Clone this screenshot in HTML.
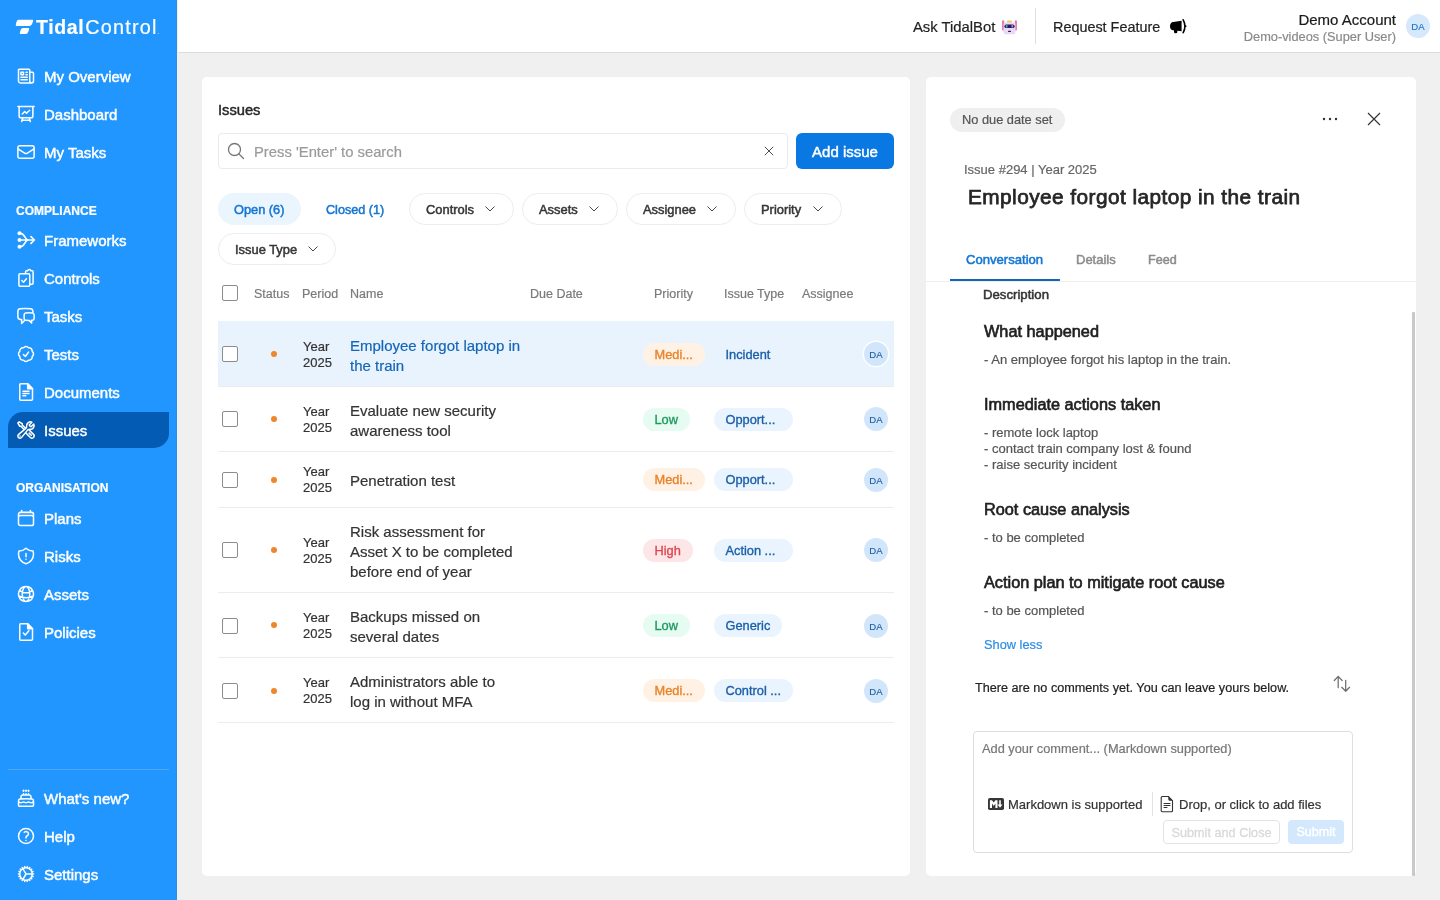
<!DOCTYPE html>
<html><head><meta charset="utf-8">
<style>
*{box-sizing:border-box;margin:0;padding:0}
html,body{width:1440px;height:900px;overflow:hidden;background:#f0f0f0;font-family:"Liberation Sans",sans-serif;color:#222;-webkit-text-stroke:0.2px currentColor}
.a{position:absolute}
.t{position:absolute;white-space:nowrap;line-height:20px;height:20px}
#side{position:absolute;left:0;top:0;width:177px;height:900px;background:#2196ff}
#sideline{position:absolute;left:176px;top:0;width:2px;height:900px;background:linear-gradient(90deg,#3b8ad6 50%,#e2f5ff 50%)}
.nav{position:absolute;left:44px;color:#fff;font-size:15px;-webkit-text-stroke:0.45px #fff;line-height:20px;white-space:nowrap}
.ni{position:absolute;left:16px;width:20px;height:20px}
.ni svg{width:20px;height:20px;display:block;overflow:visible}
.sec{position:absolute;left:16px;color:#fff;font-weight:bold;font-size:12px;line-height:20px}
#hdr{position:absolute;left:178px;top:0;width:1262px;height:53px;background:#fff;border-bottom:1px solid #dcdcdc}
.card{position:absolute;background:#fff;border-radius:5px}
.pill{position:absolute;height:32px;border:1px solid #ededed;border-radius:16px;background:#fff}
.ft{position:absolute;font-size:12.9px;-webkit-text-stroke:0.5px currentColor;color:#363636;line-height:20px;white-space:nowrap}
.chev{position:absolute;width:10px;height:6px}
.th{position:absolute;top:284px;font-size:12.5px;color:#7a7a7a;line-height:20px;white-space:nowrap}
.cb{position:absolute;left:222px;width:16px;height:16px;border:1px solid #8c8c8c;border-radius:2px;background:#fff}
.row{position:absolute;left:218px;width:676px}
.bd{position:absolute;left:218px;width:676px;height:1px;background:#ececec}
.dot{position:absolute;left:271px;width:6px;height:6px;border-radius:3px;background:#f0862b}
.per{position:absolute;left:303px;font-size:13px;line-height:16px;color:#333;white-space:nowrap}
.nm{position:absolute;left:350px;font-size:15px;line-height:20px;color:#333;white-space:nowrap}
.tag{position:absolute;height:23px;border-radius:12px;font-size:12.8px;-webkit-text-stroke:0.35px currentColor;line-height:23px;padding-left:11.5px;white-space:nowrap}
.med{background:#fff2e5;color:#e8832a}
.low{background:#e6fbf1;color:#1e9a5e}
.high{background:#fde6e8;color:#e0474f}
.typ{background:#eaf4fe;color:#1a5fa8}
.av{position:absolute;left:864px;width:24px;height:24px;border-radius:12px;background:#d2e6fb;color:#1b5aa0;font-size:9.6px;-webkit-text-stroke:0.1px currentColor;text-align:center;line-height:25px}
.h3{position:absolute;left:984px;font-size:16.3px;-webkit-text-stroke:0.65px currentColor;color:#1f1f1f;line-height:20px;white-space:nowrap}
.p{position:absolute;left:984px;font-size:13px;color:#555;line-height:16px;white-space:nowrap}
</style></head>
<body>
<div id="root" style="position:absolute;left:0;top:0;width:1440px;height:900px;will-change:transform">
<div id="side"></div><div id="sideline"></div>
<div class="a" style="left:8px;top:412px;width:161px;height:36px;background:#035bb3;border-radius:15px 0 15px 0"></div>
<svg class="a" style="left:0;top:0" width="40" height="40" viewBox="0 0 40 40"><path d="M18.3 19.85H32.7C33.1 19.85 33.3 20.2 33.1 20.7 32.5 23.5 31.5 26 29.5 26H16.2C15.8 26 15.7 25.7 15.8 25.3 16.2 22.5 16.8 19.85 18.3 19.85Z" fill="#fff"/><path d="M22.6 27.9H28.8C29.2 27.9 29.3 28.2 29.2 28.6 28.7 31.5 27.8 33.95 26 33.95H20.2C19.8 33.95 19.7 33.6 19.8 33.2 20.3 30.3 21.2 27.9 22.6 27.9Z" fill="#fff"/></svg>
<div class="a" style="left:36px;top:15px;font-size:19.5px;line-height:24px;color:#fff;white-space:nowrap"><span style="font-weight:bold;letter-spacing:0.6px">Tidal</span><span style="font-size:19.8px;letter-spacing:1.25px;margin-left:1px">Control</span><span style="font-size:5px;opacity:.8">.</span></div>
<div class="ni" style="top:66px"><svg viewBox="0 0 24 24" fill="none" stroke="#fff" stroke-width="1.8" stroke-linecap="round" stroke-linejoin="round"><path d="M12 7.5h1.5m-1.5 3h1.5m-7.5 3h7.5m-7.5 3h7.5m3-9h3.375c.621 0 1.125.504 1.125 1.125V18a2.250 2.250 0 0 1-2.25 2.25M16.5 7.5V18a2.25 2.25 0 0 0 2.25 2.25M16.5 7.5V4.875c0-.621-.504-1.125-1.125-1.125H4.125C3.504 3.75 3 4.254 3 4.875V18a2.25 2.25 0 0 0 2.25 2.25h13.5M6 7.5h3v3H6v-3Z"/></svg></div>
<div class="nav" style="top:67px">My Overview</div>
<div class="ni" style="top:104px"><svg viewBox="0 0 24 24" fill="none" stroke="#fff" stroke-width="1.8" stroke-linecap="round" stroke-linejoin="round"><path d="M3.75 3v11.25A2.25 2.25 0 0 0 6 16.5h2.25M3.75 3h-1.5m1.5 0h16.5m0 0h1.5m-1.5 0v11.25A2.25 2.25 0 0 1 18 16.5h-2.25m-7.5 0h7.5m-7.5 0-1 3m8.5-3 1 3m0 0 .5 1.5m-.5-1.5h-9.5m0 0-.5 1.5m.75-9 3-3 2.148 2.148A12.061 12.061 0 0 1 16.5 7.605"/></svg></div>
<div class="nav" style="top:105px">Dashboard</div>
<div class="ni" style="top:142px"><svg viewBox="0 0 24 24" fill="none" stroke="#fff" stroke-width="1.8" stroke-linecap="round" stroke-linejoin="round"><path d="M21.75 6.75v10.5a2.25 2.25 0 0 1-2.25 2.25h-15a2.25 2.25 0 0 1-2.25-2.25V6.75m19.5 0A2.25 2.25 0 0 0 19.5 4.5h-15a2.25 2.25 0 0 0-2.250 2.25m19.5 0v.243a2.25 2.25 0 0 1-1.07 1.916l-7.5 4.615a2.25 2.25 0 0 1-2.36 0L3.32 8.91a2.25 2.25 0 0 1-1.07-1.916V6.75"/></svg></div>
<div class="nav" style="top:143px">My Tasks</div>
<div class="ni" style="top:230px"><svg viewBox="0 0 24 24" fill="none" stroke="#fff" stroke-width="1.8" stroke-linecap="round" stroke-linejoin="round"><circle cx='4.2' cy='4' r='2.4' fill='#fff' stroke='none'/><circle cx='4.2' cy='12' r='2.4' fill='#fff' stroke='none'/><circle cx='4.2' cy='20' r='2.4' fill='#fff' stroke='none'/><path d='M5.5 4c5 0 5 8 9 8M5.5 20c5 0 5-8 9-8M5.5 12h16.5M18 8l4 4-4 4' stroke-width='2'/></svg></div>
<div class="nav" style="top:231px">Frameworks</div>
<div class="ni" style="top:268px"><svg viewBox="0 0 24 24" fill="none" stroke="#fff" stroke-width="1.8" stroke-linecap="round" stroke-linejoin="round"><path d='M11.5 6.5V4.5c0-.7.5-1.2 1.2-1.2h1.3c.3-.9 1-1.5 2-1.5s1.7.6 2 1.5h1.3c.7 0 1.2.5 1.2 1.2v13.8c0 .7-.5 1.2-1.2 1.2H17'/><rect x='3.5' y='7' width='13' height='15' rx='1.3'/><path d='M7 15l2 2 3.5-4'/></svg></div>
<div class="nav" style="top:269px">Controls</div>
<div class="ni" style="top:306px"><svg viewBox="0 0 24 24" fill="none" stroke="#fff" stroke-width="1.8" stroke-linecap="round" stroke-linejoin="round"><path d="M20.25 8.511c.884.284 1.5 1.128 1.5 2.097v4.286c0 1.136-.847 2.1-1.98 2.193-.34.027-.68.052-1.020.072v3.091l-3-3c-1.354 0-2.694-.055-4.020-.163a2.115 2.115 0 0 1-.825-.242m9.345-8.334a2.126 2.126 0 0 0-.476-.095 48.64 48.64 0 0 0-8.048 0c-1.131.094-1.976 1.057-1.976 2.192v4.286c0 .837.46 1.58 1.155 1.951m9.345-8.334V6.637c0-1.621-1.152-3.026-2.76-3.235A48.455 48.455 0 0 0 11.25 3c-2.115 0-4.198.137-6.24.402-1.608.209-2.76 1.614-2.76 3.235v6.226c0 1.621 1.152 3.026 2.76 3.235.577.075 1.157.14 1.74.194V21l4.155-4.155"/></svg></div>
<div class="nav" style="top:307px">Tasks</div>
<div class="ni" style="top:344px"><svg viewBox="0 0 24 24" fill="none" stroke="#fff" stroke-width="1.8" stroke-linecap="round" stroke-linejoin="round"><path d="M9 12.75 11.25 15 15 9.75M21 12c0 1.268-.63 2.39-1.593 3.068a3.745 3.745 0 0 1-1.043 3.296 3.745 3.745 0 0 1-3.296 1.043A3.745 3.745 0 0 1 12 21c-1.268 0-2.39-.63-3.068-1.593a3.746 3.746 0 0 1-3.296-1.043 3.745 3.745 0 0 1-1.043-3.296A3.745 3.745 0 0 1 3 12c0-1.268.63-2.39 1.593-3.068a3.745 3.745 0 0 1 1.043-3.296 3.746 3.746 0 0 1 3.296-1.043A3.746 3.746 0 0 1 12 3c1.268 0 2.39.63 3.068 1.593a3.746 3.746 0 0 1 3.296 1.043 3.746 3.746 0 0 1 1.043 3.296A3.745 3.745 0 0 1 21 12Z"/></svg></div>
<div class="nav" style="top:345px">Tests</div>
<div class="ni" style="top:382px"><svg viewBox="0 0 24 24" fill="none" stroke="#fff" stroke-width="1.8" stroke-linecap="round" stroke-linejoin="round"><path d='M5.7 2.2h8.3l5.8 5.8v12.6c0 .7-.5 1.2-1.2 1.2H5.7c-.7 0-1.2-.5-1.2-1.2V3.4c0-.7.5-1.2 1.2-1.2Z'/><path d='M14 2.2v5.8h5.8Z' fill='#fff'/><path d='M8.3 11h7.3M8.3 13.8h7.3M8.3 16.6h3.4'/></svg></div>
<div class="nav" style="top:383px">Documents</div>
<div class="ni" style="top:420px"><svg viewBox="0 0 24 24" fill="none" stroke="#fff" stroke-width="1.8" stroke-linecap="round" stroke-linejoin="round"><path d="M11.42 15.17 17.25 21A2.652 2.652 0 0 0 21 17.25l-5.877-5.877M11.42 15.17l2.496-3.03c.317-.384.74-.626 1.208-.766M11.42 15.17l-4.655 5.653a2.548 2.548 0 1 1-3.586-3.586l6.837-5.63m5.108-.233c.55-.164 1.163-.188 1.743-.14a4.5 4.5 0 0 0 4.486-6.336l-3.276 3.277a3.004 3.004 0 0 1-2.25-2.25l3.276-3.276a4.5 4.5 0 0 0-6.336 4.486c.091 1.076-.071 2.264-.904 2.95l-.102.085m-1.745 1.437L5.909 7.5H4.5L2.25 3.75l1.5-1.5L7.5 4.5v1.409l4.26 4.26m-1.745 1.437 1.745-1.437m6.615 8.206L15.75 15.75M4.867 19.125h.008v.008h-.008v-.008Z"/></svg></div>
<div class="nav" style="top:421px">Issues</div>
<div class="ni" style="top:508px"><svg viewBox="0 0 24 24" fill="none" stroke="#fff" stroke-width="1.8" stroke-linecap="round" stroke-linejoin="round"><path d="M6.75 3v2.25M17.25 3v2.25M3 18.75V7.5a2.25 2.25 0 0 1 2.25-2.25h13.5A2.25 2.25 0 0 1 21 7.5v11.25m-18 0A2.25 2.25 0 0 0 5.25 21h13.5A2.25 2.25 0 0 0 21 18.75m-18 0v-7.5A2.25 2.25 0 0 1 5.25 9h13.5A2.25 2.25 0 0 1 21 11.25v7.5"/></svg></div>
<div class="nav" style="top:509px">Plans</div>
<div class="ni" style="top:546px"><svg viewBox="0 0 24 24" fill="none" stroke="#fff" stroke-width="1.8" stroke-linecap="round" stroke-linejoin="round"><path d="M12 9v3.75m0-10.036A11.959 11.959 0 0 1 3.598 6 11.99 11.99 0 0 0 3 9.75c0 5.592 3.824 10.29 9 11.622 5.176-1.332 9-6.03 9-11.622 0-1.31-.21-2.57-.598-3.75h-.152c-3.196 0-6.1-1.25-8.25-3.286Zm0 13.036h.008v.008H12v-.008Z"/></svg></div>
<div class="nav" style="top:547px">Risks</div>
<div class="ni" style="top:584px"><svg viewBox="0 0 24 24" fill="none" stroke="#fff" stroke-width="1.8" stroke-linecap="round" stroke-linejoin="round"><path d="M12 21a9.004 9.004 0 0 0 8.716-6.747M12 21a9.004 9.004 0 0 1-8.716-6.747M12 21c2.485 0 4.5-4.03 4.5-9S14.485 3 12 3m0 18c-2.485 0-4.5-4.03-4.5-9S9.515 3 12 3m0 0a8.997 8.997 0 0 1 7.843 4.582M12 3a8.997 8.997 0 0 0-7.843 4.582m15.686 0A11.953 11.953 0 0 1 12 10.5c-2.998 0-5.74-1.1-7.843-2.918m15.686 0A8.959 8.959 0 0 1 21 12c0 .778-.099 1.533-.284 2.253m0 0A17.919 17.919 0 0 1 12 16.5c-3.162 0-6.133-.815-8.716-2.247m0 0A9.015 9.015 0 0 1 3 12c0-1.605.42-3.113 1.157-4.418"/></svg></div>
<div class="nav" style="top:585px">Assets</div>
<div class="ni" style="top:622px"><svg viewBox="0 0 24 24" fill="none" stroke="#fff" stroke-width="1.8" stroke-linecap="round" stroke-linejoin="round"><path d='M5.7 2.2h8.3l5.8 5.8v12.6c0 .7-.5 1.2-1.2 1.2H5.7c-.7 0-1.2-.5-1.2-1.2V3.4c0-.7.5-1.2 1.2-1.2Z'/><path d='M14 2.2v5.8h5.8Z' fill='#fff'/><path d='M8.8 13.2l2.3 2.4 4.4-5'/></svg></div>
<div class="nav" style="top:623px">Policies</div>
<div class="ni" style="top:788px"><svg viewBox="0 0 24 24" fill="none" stroke="#fff" stroke-width="1.8" stroke-linecap="round" stroke-linejoin="round"><path d="M12 8.25v-1.5m0 1.5c-1.355 0-2.697.056-4.024.166C6.845 8.51 6 9.473 6 10.608v2.513m6-4.871c1.355 0 2.697.056 4.024.166C17.155 8.51 18 9.473 18 10.608v2.513M15 8.25v-1.5m-6 1.5v-1.5m12 9.75-1.5.75a3.354 3.354 0 0 1-3 0 3.354 3.354 0 0 0-3 0 3.354 3.354 0 0 1-3 0 3.354 3.354 0 0 0-3 0 3.354 3.354 0 0 1-3 0L3 16.5m15-3.379a48.474 48.474 0 0 0-6-.371c-2.032 0-4.034.126-6 .371m12 0c.39.049.777.102 1.163.16 1.07.16 1.837 1.094 1.837 2.175v5.169c0 .621-.504 1.125-1.125 1.125H4.125A1.125 1.125 0 0 1 3 20.625v-5.17c0-1.08.768-2.014 1.837-2.174A47.78 47.78 0 0 1 6 13.12M12.265 3.11a.375.375 0 1 1-.53 0L12 2.845l.265.265Zm-3 0a.375.375 0 1 1-.53 0L9 2.845l.265.265Zm6 0a.375.375 0 1 1-.53 0L15 2.845l.265.265Z"/></svg></div>
<div class="nav" style="top:789px">What&#39;s new?</div>
<div class="ni" style="top:826px"><svg viewBox="0 0 24 24" fill="none" stroke="#fff" stroke-width="1.8" stroke-linecap="round" stroke-linejoin="round"><path d="M9.879 7.519c1.171-1.025 3.071-1.025 4.242 0 1.172 1.025 1.172 2.687 0 3.712-.203.179-.43.326-.67.442-.745.361-1.45.999-1.45 1.827v.75M21 12a9 9 0 1 1-18 0 9 9 0 0 1 18 0Zm-9 5.25h.008v.008H12v-.008Z"/></svg></div>
<div class="nav" style="top:827px">Help</div>
<div class="ni" style="top:864px"><svg viewBox="0 0 24 24" fill="none" stroke="#fff" stroke-width="1.8" stroke-linecap="round" stroke-linejoin="round"><path d="M4.5 12a7.5 7.5 0 0 0 15 0m-15 0a7.5 7.5 0 1 1 15 0m-15 0H3m16.5 0H21m-1.5 0H12m-8.457 3.077 1.41-.513m14.095-5.13 1.41-.513M5.106 17.785l1.15-.964m11.49-9.642 1.149-.964M7.501 19.795l.75-1.3m7.5-12.99.75-1.3m-6.063 16.658.26-1.477m2.605-14.772.26-1.477m0 17.726-.26-1.477M10.698 4.614l-.26-1.477M16.5 19.794l-.75-1.299M7.5 4.205 12 12m6.894 5.785-1.149-.964M6.256 7.178l-1.15-.964m15.352 8.864-1.41-.513M4.954 9.435l-1.41-.514M12.002 12l-3.75 6.495"/></svg></div>
<div class="nav" style="top:865px">Settings</div>
<div class="sec" style="top:201px">COMPLIANCE</div>
<div class="sec" style="top:478px">ORGANISATION</div>
<div class="a" style="left:8px;top:769px;width:161px;height:1px;background:#4aa6f7"></div>
<div id="hdr"></div>
<div class="t" style="left:913px;top:17px;font-size:14.8px;color:#222">Ask TidalBot</div>
<svg class="a" style="left:1002px;top:19.5px" width="15" height="15" viewBox="0 0 15 15">
 <rect x="0" y="0.2" width="2.2" height="10.5" rx="1.1" fill="#e27fae"/><rect x="12.8" y="0.2" width="2.2" height="10.5" rx="1.1" fill="#e27fae"/>
 <rect x="5" y="0.4" width="5" height="2.4" rx="1.1" fill="#f2c94c"/>
 <rect x="1.6" y="2.3" width="11.8" height="12" rx="2.6" fill="#e9d8f6"/>
 <rect x="2.4" y="4.4" width="10.2" height="3.7" rx="1.85" fill="#2d1b5e"/>
 <rect x="3.9" y="5.1" width="1.6" height="2.3" rx=".5" fill="#3db5a9"/><rect x="9.5" y="5.1" width="1.6" height="2.3" rx=".5" fill="#a08fe0"/>
 <rect x="6" y="10.8" width="3" height="1.3" rx=".65" fill="#2d1b5e"/>
</svg>
<div class="a" style="left:1035px;top:8px;width:1px;height:36px;background:#dedede"></div>
<div class="t" style="left:1053px;top:17px;font-size:14.4px;color:#222">Request Feature</div>
<svg class="a" style="left:1170px;top:18.5px" width="17" height="15" viewBox="0 0 17 15">
 <path d="M3.2 3.1 11.6 1.7v10.6L3.2 11.3C1.4 11.2 0 9.7 0 7.2 0 4.7 1.4 3.2 3.2 3.1Z" fill="#000"/>
 <rect x="4" y="8.5" width="3.3" height="5.8" rx="1.4" fill="#000"/>
 <path d="M13.2.8c1.1 2 1.7 4.2 1.7 6.4s-.6 4.5-1.7 6.5" fill="none" stroke="#000" stroke-width="1.6" stroke-linecap="round"/>
 <circle cx="15.6" cy="7.2" r=".9" fill="#000"/>
</svg>
<div class="t" style="left:1296px;top:10px;font-size:15px;color:#1a1a1a;width:100px;text-align:right">Demo Account</div>
<div class="t" style="left:1196px;top:27px;font-size:12.8px;color:#8a8a8a;width:200px;text-align:right">Demo-videos (Super User)</div>
<div class="a" style="left:1406px;top:14px;width:24px;height:24px;border-radius:12px;background:#d6e8fb;color:#1d6fc2;font-size:9.6px;line-height:25px;text-align:center;-webkit-text-stroke:0.1px currentColor">DA</div>
<div class="card" style="left:202px;top:77px;width:708px;height:799px"></div>
<div class="t" style="left:218px;top:100px;font-size:14.7px;-webkit-text-stroke:0.45px currentColor;color:#262626">Issues</div>
<div class="a" style="left:218px;top:133px;width:570px;height:36px;border:1px solid #ebebeb;border-radius:4px;background:#fff"></div>
<svg class="a" style="left:227px;top:142px" width="18" height="18" viewBox="0 0 18 18"><circle cx="7.5" cy="7.5" r="6" fill="none" stroke="#777" stroke-width="1.3"/><path d="M12 12l4.5 4.5" stroke="#777" stroke-width="1.3" stroke-linecap="round"/></svg>
<div class="t" style="left:254px;top:142px;font-size:14.8px;color:#9a9a9a">Press &#39;Enter&#39; to search</div>
<svg class="a" style="left:764px;top:146px" width="10" height="10" viewBox="0 0 10 10"><path d="M.8.8l8.4 8.4M9.2.8 .8 9.2" stroke="#3a3a3a" stroke-width="0.9"/></svg>
<div class="a" style="left:796px;top:133px;width:98px;height:36px;border-radius:6px;background:#0a78e3;color:#fff;font-size:15px;-webkit-text-stroke:0.45px #fff;line-height:37px;text-align:center">Add issue</div>
<div class="a" style="left:218px;top:193px;width:83px;height:32px;border-radius:16px;background:#ebf5fe"></div>
<div class="ft" style="left:234px;top:200px;color:#1677d2;font-size:12.8px">Open (6)</div>
<div class="ft" style="left:326px;top:200px;color:#1677d2;font-size:12.6px">Closed (1)</div>
<div class="pill" style="left:409px;top:193px;width:105px"></div>
<div class="ft" style="left:426px;top:200px">Controls</div>
<svg class="chev" style="left:485px;top:206px" width="10" height="6" viewBox="0 0 10 6"><path d="M.5.5 5 5 9.5.5" fill="none" stroke="#484848" stroke-width="1"/></svg>
<div class="pill" style="left:522px;top:193px;width:96px"></div>
<div class="ft" style="left:539px;top:200px">Assets</div>
<svg class="chev" style="left:589px;top:206px" width="10" height="6" viewBox="0 0 10 6"><path d="M.5.5 5 5 9.5.5" fill="none" stroke="#484848" stroke-width="1"/></svg>
<div class="pill" style="left:626px;top:193px;width:110px"></div>
<div class="ft" style="left:643px;top:200px">Assignee</div>
<svg class="chev" style="left:707px;top:206px" width="10" height="6" viewBox="0 0 10 6"><path d="M.5.5 5 5 9.5.5" fill="none" stroke="#484848" stroke-width="1"/></svg>
<div class="pill" style="left:744px;top:193px;width:98px"></div>
<div class="ft" style="left:761px;top:200px">Priority</div>
<svg class="chev" style="left:813px;top:206px" width="10" height="6" viewBox="0 0 10 6"><path d="M.5.5 5 5 9.5.5" fill="none" stroke="#484848" stroke-width="1"/></svg>
<div class="pill" style="left:218px;top:233px;width:118px"></div>
<div class="ft" style="left:235px;top:240px">Issue Type</div>
<svg class="chev" style="left:308px;top:246px" width="10" height="6" viewBox="0 0 10 6"><path d="M.5.5 5 5 9.5.5" fill="none" stroke="#484848" stroke-width="1"/></svg>
<div class="cb" style="top:285px"></div>
<div class="th" style="left:254px">Status</div>
<div class="th" style="left:302px">Period</div>
<div class="th" style="left:350px">Name</div>
<div class="th" style="left:530px">Due Date</div>
<div class="th" style="left:654px">Priority</div>
<div class="th" style="left:724px">Issue Type</div>
<div class="th" style="left:802px">Assignee</div>
<div class="row" style="top:321px;height:65px;background:#e9f3fe"></div>
<div class="bd" style="top:386px"></div>
<div class="cb" style="top:346px"></div>
<div class="dot" style="top:351px"></div>
<div class="per" style="top:338.55px">Year<br>2025</div>
<div class="nm" style="top:335.80px;color:#1466b8;">Employee forgot laptop in<br>the train</div>
<div class="tag med" style="left:643px;top:343px;width:62px">Medi...</div>
<div class="tag" style="left:714px;top:343px;color:#1a5fa8">Incident</div>
<div class="av" style="top:342px;box-shadow:0 0 0 1.5px #fbfdff;">DA</div>
<div class="bd" style="top:451px"></div>
<div class="cb" style="top:411px"></div>
<div class="dot" style="top:416px"></div>
<div class="per" style="top:403.55px">Year<br>2025</div>
<div class="nm" style="top:400.80px;">Evaluate new security<br>awareness tool</div>
<div class="tag low" style="left:643px;top:408px;width:47px">Low</div>
<div class="tag typ" style="left:714px;top:408px;width:79px">Opport...</div>
<div class="av" style="top:407px;">DA</div>
<div class="bd" style="top:507px"></div>
<div class="cb" style="top:472px"></div>
<div class="dot" style="top:477px"></div>
<div class="per" style="top:464.05px">Year<br>2025</div>
<div class="nm" style="top:471.30px;">Penetration test</div>
<div class="tag med" style="left:643px;top:468px;width:62px">Medi...</div>
<div class="tag typ" style="left:714px;top:468px;width:79px">Opport...</div>
<div class="av" style="top:468px;">DA</div>
<div class="bd" style="top:592px"></div>
<div class="cb" style="top:542px"></div>
<div class="dot" style="top:547px"></div>
<div class="per" style="top:534.65px">Year<br>2025</div>
<div class="nm" style="top:521.90px;">Risk assessment for<br>Asset X to be completed<br>before end of year</div>
<div class="tag high" style="left:643px;top:539px;width:50px">High</div>
<div class="tag typ" style="left:714px;top:539px;width:79px">Action ...</div>
<div class="av" style="top:538px;">DA</div>
<div class="bd" style="top:657px"></div>
<div class="cb" style="top:618px"></div>
<div class="dot" style="top:622px"></div>
<div class="per" style="top:609.85px">Year<br>2025</div>
<div class="nm" style="top:607.10px;">Backups missed on<br>several dates</div>
<div class="tag low" style="left:643px;top:614px;width:47px">Low</div>
<div class="tag typ" style="left:714px;top:614px;width:68px">Generic</div>
<div class="av" style="top:614px;">DA</div>
<div class="bd" style="top:722px"></div>
<div class="cb" style="top:683px"></div>
<div class="dot" style="top:688px"></div>
<div class="per" style="top:674.95px">Year<br>2025</div>
<div class="nm" style="top:672.20px;">Administrators able to<br>log in without MFA</div>
<div class="tag med" style="left:643px;top:679px;width:62px">Medi...</div>
<div class="tag typ" style="left:714px;top:679px;width:79px">Control ...</div>
<div class="av" style="top:679px;">DA</div>
<div class="card" style="left:926px;top:77px;width:490px;height:799px"></div>
<div class="a" style="left:950px;top:108px;width:115px;height:24px;border-radius:12px;background:#efefef"></div>
<div class="t" style="left:962px;top:110px;font-size:12.8px;color:#555">No due date set</div>
<svg class="a" style="left:1322px;top:117px" width="16" height="4" viewBox="0 0 16 4"><circle cx="2" cy="2" r="1.2" fill="#333"/><circle cx="8" cy="2" r="1.2" fill="#333"/><circle cx="14" cy="2" r="1.2" fill="#333"/></svg>
<svg class="a" style="left:1367px;top:112px" width="14" height="14" viewBox="0 0 14 14"><path d="M1 1l12 12M13 1 1 13" stroke="#333" stroke-width="1.15"/></svg>
<div class="t" style="left:964px;top:160px;font-size:13px;color:#666">Issue #294 | Year 2025</div>
<div class="t" style="left:968px;top:185px;font-size:20.8px;letter-spacing:0.45px;line-height:24px;height:24px;-webkit-text-stroke:0.75px currentColor;color:#262626">Employee forgot laptop in the train</div>
<div class="t" style="left:966px;top:250px;font-size:13.1px;-webkit-text-stroke:0.55px currentColor;color:#1677d2">Conversation</div>
<div class="t" style="left:1076px;top:250px;font-size:13px;-webkit-text-stroke:0.5px currentColor;color:#8c8c8c">Details</div>
<div class="t" style="left:1148px;top:250px;font-size:12.6px;-webkit-text-stroke:0.5px currentColor;color:#8c8c8c">Feed</div>
<div class="a" style="left:926px;top:281px;width:490px;height:1px;background:#efefef"></div>
<div class="a" style="left:950px;top:279px;width:110px;height:2px;background:#1465b8"></div>
<div class="t" style="left:983px;top:285px;font-size:13.2px;-webkit-text-stroke:0.5px currentColor;color:#333">Description</div>
<div class="a" style="left:1412px;top:312px;width:3px;height:564px;background:#c9c9c9;border-radius:1px"></div>
<div class="h3" style="top:320.5px">What happened</div>
<div class="h3" style="top:393.5px">Immediate actions taken</div>
<div class="h3" style="top:498.5px">Root cause analysis</div>
<div class="h3" style="top:572px">Action plan to mitigate root cause</div>
<div class="p" style="top:352px">- An employee forgot his laptop in the train.</div>
<div class="p" style="top:425px">- remote lock laptop<br>- contact train company lost &amp; found<br>- raise security incident</div>
<div class="p" style="top:530px">- to be completed</div>
<div class="p" style="top:603px">- to be completed</div>
<div class="t" style="left:984px;top:635px;font-size:12.8px;color:#2a8de8">Show less</div>
<div class="t" style="left:975px;top:678px;font-size:12.65px;color:#222">There are no comments yet. You can leave yours below.</div>
<svg class="a" style="left:1333px;top:675px" width="18" height="18" viewBox="0 0 18 18"><path d="M5.2 1.5V12.7M1.3 5.5 5.2 1.4 9.1 5.5M12.7 5.3V16.3M8.8 12.3l3.9 4 3.9-4" fill="none" stroke="#6e6e6e" stroke-width="1.25" stroke-linecap="round" stroke-linejoin="round"/></svg>
<div class="a" style="left:973px;top:731px;width:380px;height:122px;border:1px solid #dedede;border-radius:4px"></div>
<div class="t" style="left:982px;top:739px;font-size:12.8px;color:#777">Add your comment... (Markdown supported)</div>
<svg class="a" style="left:988px;top:798px" width="16" height="12" viewBox="0 0 16 12"><rect x="0" y="0" width="16" height="12" rx="1.8" fill="#363636"/><path d="M1.9 2.2h2.1l1.7 2.4 1.7-2.4h2.1v7.7H7.4V5.6L5.7 7.9 4 5.6v4.3H1.9Z" fill="#fff"/><path d="M11.2 2.2h1.6v4.2h1.7l-2.5 3.3-2.5-3.3h1.7Z" fill="#fff"/></svg>
<div class="t" style="left:1008px;top:795px;font-size:13px;color:#333">Markdown is supported</div>
<div class="a" style="left:1152px;top:792px;width:1px;height:24px;background:#e3e3e3"></div>
<svg class="a" style="left:1160px;top:795px" width="14" height="18" viewBox="0 0 14 18"><path d="M2.2 1.5h6.3l4 4.2v10c0 .6-.5 1-1 1H2.2c-.6 0-1-.4-1-1V2.5c0-.6.4-1 1-1Z" fill="none" stroke="#333" stroke-width="1.1"/><path d="M8.3 1.3v2.9c0 .9.6 1.5 1.5 1.5h2.9Z" fill="#333"/><path d="M4 8.5h6M4 10.5h6M4 12.5h3" stroke="#333" stroke-width="1" stroke-linecap="round"/></svg>
<div class="t" style="left:1179px;top:795px;font-size:13px;color:#333">Drop, or click to add files</div>
<div class="a" style="left:1163px;top:820px;width:117px;height:24px;border:1px solid #e3e3e3;border-radius:4px;font-size:12.7px;-webkit-text-stroke:0.3px currentColor;color:#d9d9d9;text-align:center;line-height:24px">Submit and Close</div>
<div class="a" style="left:1288px;top:820px;width:56px;height:24px;border-radius:4px;background:#d3e8fd;font-size:12.6px;-webkit-text-stroke:0.35px #fff;color:#fff;text-align:center;line-height:25px">Submit</div>
</div>
</body></html>
